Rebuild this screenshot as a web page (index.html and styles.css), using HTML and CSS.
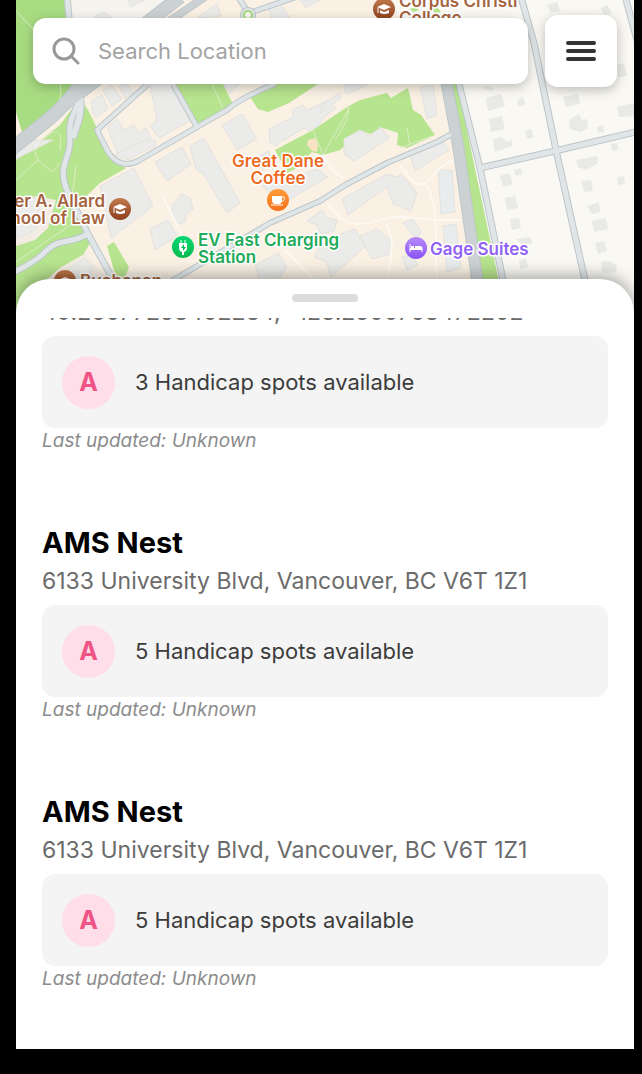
FILE: index.html
```html
<!DOCTYPE html>
<html lang="en">
<head>
    <meta charset="UTF-8">
    <meta name="viewport" content="width=device-width, initial-scale=1.0">
    <title>Parking</title>
    <link rel="stylesheet" href="styles.css">
</head>
<body>
    <div class="screen">
        <div class="map-area">
            <svg class="map" viewBox="16 0 618 320" preserveAspectRatio="xMidYMin slice" role="img" aria-label="Map">
                <defs>
                    <linearGradient id="brown" x1="0" y1="0" x2="0" y2="1"><stop offset="0" stop-color="#c17a4c"/><stop offset="1" stop-color="#8e3f1e"/></linearGradient>
                    <linearGradient id="orange" x1="0" y1="0" x2="0" y2="1"><stop offset="0" stop-color="#ff9d3b"/><stop offset="1" stop-color="#f7701d"/></linearGradient>
                    <linearGradient id="green" x1="0" y1="0" x2="0" y2="1"><stop offset="0" stop-color="#05d873"/><stop offset="1" stop-color="#08ba50"/></linearGradient>
                    <linearGradient id="purple" x1="0" y1="0" x2="0" y2="1"><stop offset="0" stop-color="#b78bfb"/><stop offset="1" stop-color="#8a52f3"/></linearGradient>
                    <g id="cap">
                        <path d="M-7-2L0-5 7-2 0 1z" fill="#fff"/>
                        <path d="M-4 1v3Q0 6 5 4V1L0 3z" fill="#fff"/>
                        <path d="M-6-1v5" stroke="#fff" fill="none"/>
                    </g>
                </defs>

                <!-- land -->
                <rect x="16" width="618" height="320" fill="#faf1e4"/>
                <path d="M385 0H634V320H505L478 200 440 60z" fill="#f9f8f3"/>
                <path d="M70 0H180L90 84H74z" fill="#f6f4ef"/>

                <!-- parks -->
                <g fill="#b7e48e">
                    <path d="M16 0H64L78 90 58 112 22 132 16 112z" fill="#a8dc82"/>
                    <path d="M16 160L60 125 80 98 88 110 97 128 112 160 126 168 100 183 80 202 76 212 92 240 83 255 60 268 40 285 16 310z"/>
                    <path d="M174 84H223L233 104 198 124z"/>
                    <path d="M249 96L258 109 268 112 289 103 318 84H277z"/>
                    <path d="M275 150L313 130 347 107 360 100 387 93 391 98 408 88 413 110 421 115 435 135 407 148 397 145 398 133 383 128 370 134 360 130 352 140 340 150 323 155 312 152 297 168 287 173z"/>
                    <path d="M107 246L114 242 129 267 125 277H116z"/>
                    <path d="M448 80H457L469 140 499 282H481L463 145z"/>
                    <path d="M410 9l6-2 3 3-6 2zM432 9l6-1 3 4-6 1z"/>
                </g>
                <path d="M16 210L34 196 56 200 48 228 35 240 16 246zM60 268L86 253 108 282H50z" fill="#f3ece2"/>
                <path d="M308 140l7-2 3 6-1 8-5-1-5-6z" fill="#f8e3c2"/>

                <!-- buildings -->
                <g fill="#ebebea" stroke="#e3e2df">
                    <path d="M92 100l10-5 6 14-12 8-4-6zM103 90l8-5 11 14-10 7zM119 86l8-3 6 10-8 6z"/>
                    <path d="M107 127l10-8 7 11 10-5 4 8 8-5 5 10-32 18z"/>
                    <path d="M150 84H170L190 121 159 138 150 126 157 120z"/>
                    <path d="M222 125l20-11 15 25-20 11z"/>
                    <path d="M269 129l24-12 0-7 10-5 5 5 20-10 8 8-12 9-5 9-12 5-3-3-20 12-5 2-3 4-6-4z"/>
                    <path d="M228 78h18l-16 15-6-7z"/>
                    <path d="M114 155l22-11 12-4h7l1 5-28 15z"/>
                    <path d="M155 162l27-15 9 17-24 17z"/>
                    <path d="M190 146l14-8 36 65-13 10-23-38-8-6z"/>
                    <path d="M100 186l34-18 19 38-42 32z"/>
                    <path d="M173 204l9-10 9 5 2 10-7 6-1 7-8 2-5-8z"/>
                    <path d="M150 229l18-9 9 16-22 14z"/>
                    <path d="M256 158l12-7 6 12-11 7z"/>
                    <path d="M262 186l56-17 10 8-45 26z"/>
                    <path d="M255 265l23-12 9 14-10 15h-17z"/>
                    <path d="M307 221l15-11 4 8 11 2-3 11-13 3-4-9z"/>
                    <path d="M342 199l45-25 10 3 4-3 8 8 8 12-6 17-18-7-6-17-39 28z"/>
                    <path d="M410 154l33-12 6 8-34 21z"/>
                    <path d="M438 170h14l3 42-14 2zM443 226l13-2 5 44-14 4z" fill="#e9ecec"/>
                    <path d="M360 236l17-7 13 10 1 15-11 3-8 2z"/>
                    <path d="M345 232l-25 13-6 12 13 5 4 15 34-30-10-18z"/>
                    <path d="M403 223l10-4 8 12-4 8zM402 257l10-2 6 10-11 5z"/>
                    <path d="M344 139l16-9 9 6 12-9 8 11-35 23-10-7z"/>
                    <path d="M420 87l13-2 4 30-10 4zM322 105l17-12 2 5-20 15zM344 85h24l-22 9z"/>
                    <path d="M16 208l17-11 7 5-5 28-19 9zM64 272l20-14 9 10-10 14H68z"/>
                    <path d="M16 143l20-3H53L16 159z"/>
                    <path d="M94 17l10-5 8 6zM128 0h16l-13 7z"/>
                    <path d="M197 18l20-14 4 12zM268 8l12-6 10 16h-18zM300 0h20l-14 8z"/>
                </g>
                <g fill="#e9e9e6">
                    <path d="M483 86l12 2-3 3-8-2zM486 98l15-4 4 12-17 5zM517 102l5-6 4 8-7 3zM489 119l13-3 3 13-14 3zM525 131l6-2 3 8-7 2zM493 139l9-2 4 5 6-2v6l-17 6z"/>
                    <path d="M563 97l15-3 2 10-14 3zM617 107l17-4v13l-15 1zM569 120l10-6 3 6 5-1 1 9-8 4-10-3zM597 127l6-2 1 7-6 1zM617 65l7-2 3 13-9 1zM547 5l10-3 3 9-9 2zM601 8l6-3 5 8-8 2z"/>
                    <path d="M500 176l9-3 4 11-10 3zM514 170l7-2 2 6-7 2zM505 198l10-2 3 12-11 2zM510 219l9-1 2 10-9 2zM516 239l14-2 3 6-10 3zM519 260l7-1 2 8-8 2z"/>
                    <path d="M576 160l21-4 1 7-12 7-8-3zM581 181l10-1 2 11-9 1zM587 206l12-4 1 10-8 2zM592 221l14-3 2 11-14 3zM595 243l9-2 3 10-9 3zM601 262l9-1 7 5-1 6-13 1zM617 177l7-1 1 8-7 1zM610 144l7-1 1 7-5 1z"/>
                </g>

                <!-- footpaths -->
                <g fill="none" stroke="#dcedc6" stroke-width="1">
                    <path d="M16 11L34 30M60 84C66 110 40 118 22 132M36 150C48 132 64 120 60 150M16 180L38 160 52 172 60 163M38 160L30 140M212 84L223 108M313 130L323 155 350 107M335 140C348 122 350 110 347 107M407 128L410 145M400 148L432 136M72 198L76 165M16 262L75 222"/>
                </g>
                <g fill="none" stroke="#fdf8f0" stroke-width="2">
                    <path d="M162 194L186 244M327 202C350 240 375 218 395 217S425 222 462 220M400 165C410 180 418 190 427 182S440 165 454 160M427 186C440 210 434 240 437 280M386 224C396 240 390 260 388 280M324 155Q332 175 345 178M285 250L316 282"/>
                </g>

                <!-- roads, edge first and surface on top -->
                <g fill="none" stroke-linejoin="round">
                    <g stroke="#bdc6c9">
                        <path stroke-width="7" d="M67 -4L72 50 79 90C81 112 67 112 70 140 70 160 58 165 66 188L88 234 116 285M88 234C66 246 60 236 43 254Q32 264 10 274"/>
                        <path stroke-width="6" d="M148 84L97 130 108 152Q120 170 138 161L197 127 227 110Q240 98 275 84M173 84L197 127"/>
                        <path stroke-width="6" d="M170 282L226 249 270 223 320 201 347 184 387 163 437 142 452 134M238 -3L246 9M252 12L296 -3"/>
                        <path stroke-width="7" d="M458 80L480 168 504 285M521 -3L534 43 556 150 586 285M480 168L555 151 640 131M625 -4L637 40"/>
                        <path stroke-width="14" d="M8 152L50 118Q66 104 76 90L140 28 180 -3"/>
                        <path stroke-width="8" d="M64 108L98 82 168 22 205 -3M79 90C84 115 76 125 73 138"/>
                        <path stroke-width="12" d="M436 40L446 80 458 145 478 285"/>
                    </g>
                    <g stroke="#e0e6e8">
                        <path stroke-width="5" d="M67 -4L72 50 79 90C81 112 67 112 70 140 70 160 58 165 66 188L88 234 116 285M88 234C66 246 60 236 43 254Q32 264 10 274"/>
                        <path stroke-width="4" d="M148 84L97 130 108 152Q120 170 138 161L197 127 227 110Q240 98 275 84M173 84L197 127"/>
                        <path stroke-width="4" d="M170 282L226 249 270 223 320 201 347 184 387 163 437 142 452 134M238 -3L246 9M252 12L296 -3"/>
                        <path stroke-width="5" d="M458 80L480 168 504 285M521 -3L534 43 556 150 586 285M480 168L555 151 640 131M625 -4L637 40"/>
                        <path stroke-width="6" d="M79 90C84 115 76 125 73 138"/>
                    </g>
                    <g stroke="#ccd2d3">
                        <path stroke-width="12" d="M8 152L50 118Q66 104 76 90L140 28 180 -3"/>
                        <path stroke-width="6" d="M64 108L98 82 168 22 205 -3"/>
                        <path stroke-width="10" d="M436 40L446 80 458 145 478 285"/>
                    </g>
                </g>
                <circle cx="248" cy="15" r="8" fill="#bdc6c9"/>
                <circle cx="248" cy="15" r="7" fill="#e0e6e8"/>
                <circle cx="248" cy="15" r="4" fill="#f9f8f3" stroke="#a5d97b" stroke-width="2"/>

                <!-- places -->
                <g class="place brown">
                    <circle cx="384" cy="9" r="11" fill="url(#brown)"/>
                    <use href="#cap" x="384" y="9"/>
                    <text x="399" y="7">Corpus Christi</text>
                    <text x="399" y="24">College</text>
                </g>
                <g class="place brown">
                    <circle cx="120" cy="209" r="11" fill="url(#brown)"/>
                    <use href="#cap" x="120" y="209"/>
                    <text x="105" y="207" text-anchor="end">Peter A. Allard</text>
                    <text x="105" y="224" text-anchor="end">School of Law</text>
                </g>
                <g class="place brown">
                    <circle cx="65" cy="281" r="11" fill="url(#brown)"/>
                    <use href="#cap" x="65" y="282"/>
                    <text x="80" y="287">Buchanan</text>
                </g>
                <g class="place orange">
                    <circle cx="278" cy="200" r="11" fill="url(#orange)"/>
                    <path d="M272 196h10v4q0 4-3 4h-4q-3 0-3-4z" fill="#fff"/>
                    <path d="M282 197h2q2 3-3 5M271 205h12" fill="none" stroke="#fff"/>
                    <text x="278" y="167" text-anchor="middle">Great Dane</text>
                    <text x="278" y="184" text-anchor="middle">Coffee</text>
                </g>
                <g class="place green">
                    <circle cx="183" cy="247" r="11" fill="url(#green)"/>
                    <path d="M179 243h8v5q0 3-3 4v3h-2v-3q-3-1-3-4z" fill="#fff"/>
                    <path d="M181 240v3M185 240v3" stroke="#fff" stroke-width="1"/>
                    <path d="M184 244l-3 4h2v3l3-4h-2z" fill="#09c45b"/>
                    <text x="198" y="246">EV Fast Charging</text>
                    <text x="198" y="263">Station</text>
                </g>
                <g class="place purple">
                    <circle cx="416" cy="248" r="11" fill="url(#purple)"/>
                    <path d="M410 244v8M422 247v5" stroke="#fff" stroke-width="1"/>
                    <path d="M410 248h12v2h-12z" fill="#fff"/>
                    <path d="M411 246h3v2h-3zM415 246h6l1 2h-7z" fill="#fff"/>
                    <text x="430" y="255">Gage Suites</text>
                </g>
            </svg>

            <header class="top-bar">
                <label class="search">
                    <svg class="search-icon" viewBox="0 0 28 28" fill="none" stroke="#999" stroke-width="3" stroke-linecap="round" aria-hidden="true">
                        <circle cx="12" cy="12" r="10"/>
                        <path d="M19 19l7 7"/>
                    </svg>
                    <input type="text" placeholder="Search Location" aria-label="Search Location">
                </label>
                <button class="menu-btn" type="button" aria-label="Menu">
                    <svg class="menu-icon" viewBox="0 0 30 20" stroke="#333" stroke-width="4" stroke-linecap="round" aria-hidden="true">
                        <path d="M2 2h26M2 10h26M2 18h26"/>
                    </svg>
                </button>
            </header>
        </div>

        <main class="sheet">
            <div class="handle"></div>
            <div class="list">
                <section class="spot">
                    <p class="address">49.26077253402234, -123.2500763472202</p>
                    <div class="card">
                        <span class="badge">A</span>
                        <span class="count">3 Handicap spots available</span>
                    </div>
                    <p class="updated">Last updated: Unknown</p>
                </section>
                <section class="spot">
                    <h2>AMS Nest</h2>
                    <p class="address">6133 University Blvd, Vancouver, BC V6T 1Z1</p>
                    <div class="card">
                        <span class="badge">A</span>
                        <span class="count">5 Handicap spots available</span>
                    </div>
                    <p class="updated">Last updated: Unknown</p>
                </section>
                <section class="spot">
                    <h2>AMS Nest</h2>
                    <p class="address">6133 University Blvd, Vancouver, BC V6T 1Z1</p>
                    <div class="card">
                        <span class="badge">A</span>
                        <span class="count">5 Handicap spots available</span>
                    </div>
                    <p class="updated">Last updated: Unknown</p>
                </section>
            </div>
        </main>
    </div>
</body>
</html>
```
FILE: styles.css
```css
* {
    margin: 0;
    padding: 0;
    box-sizing: border-box;
}

body {
    height: 100vh;
    padding: 0 8px 25px 16px;
    background-color: #000;
    font-family: Inter, "Liberation Sans", sans-serif;
}

.screen {
    display: flex;
    flex-direction: column;
    height: 100%;
    overflow: hidden;
    background-color: #f9f8f3;
}

/* map */
.map-area {
    position: relative;
    flex: none;
    height: 279px;
}

.map {
    position: absolute;
    top: 0;
    left: 0;
    width: 100%;
    height: 320px;
}

.place text {
    font-size: 17px;
    font-weight: 600;
    stroke: #fff;
    stroke-width: 3px;
    stroke-linejoin: round;
    paint-order: stroke;
}
.brown text { fill: #a5643f; }
.orange text { fill: #ee6a1f; }
.green text { fill: #1fab59; }
.purple text { fill: #9160f5; }

.top-bar {
    position: relative;
    display: flex;
    align-items: center;
    gap: 17px;
    padding: 15px 17px 0;
}

.search {
    display: flex;
    flex: 1;
    align-items: center;
    gap: 18px;
    height: 66px;
    padding: 0 19px;
    border-radius: 13px;
    background-color: #fff;
    box-shadow: 0 3px 12px rgba(0, 0, 0, .25);
}
.search-icon {
    width: 28px;
    height: 28px;
}
.search input {
    flex: 1;
    min-width: 0;
    border: 0;
    outline: 0;
    background: none;
    font: inherit;
    font-size: 22px;
    color: #333;
}
.search input::placeholder { color: #a3a3a3; }

.menu-btn {
    display: flex;
    align-items: center;
    justify-content: center;
    width: 72px;
    height: 72px;
    border: 0;
    border-radius: 13px;
    background-color: #fff;
    box-shadow: 0 3px 12px rgba(0, 0, 0, .25);
}
.menu-icon {
    width: 30px;
    height: 20px;
}

/* bottom sheet */
.sheet {
    position: relative;
    display: flex;
    flex: 1;
    flex-direction: column;
    min-height: 0;
    padding-top: 15px;
    border-radius: 34px 34px 0 0;
    background-color: #fff;
    box-shadow: 0 -3px 16px rgba(0, 0, 0, .35);
}

.handle {
    flex: none;
    align-self: center;
    width: 66px;
    height: 8px;
    margin-bottom: 16px;
    border-radius: 4px;
    background-color: #dcdcdc;
}

/* list rests at its last item */
.list {
    display: flex;
    flex: 1;
    flex-direction: column;
    justify-content: flex-end;
    gap: 71px;
    min-height: 0;
    overflow: hidden;
    padding: 0 26px 57px;
}

.spot h2 {
    margin-bottom: 5px;
    font-size: 29px;
    font-weight: 700;
    line-height: 36px;
    color: #000;
}
.address {
    margin-bottom: 9px;
    font-size: 23px;
    line-height: 30px;
    color: #6b6b6b;
}
.card {
    display: flex;
    align-items: center;
    gap: 20px;
    height: 92px;
    padding: 0 20px;
    border-radius: 13px;
    background-color: #f4f4f4;
}
.badge {
    display: flex;
    align-items: center;
    justify-content: center;
    width: 53px;
    height: 53px;
    border-radius: 50%;
    background-color: #ffdde9;
    font-size: 25px;
    font-weight: 700;
    color: #ee5586;
}
.count {
    font-size: 22px;
    color: #3c3c3c;
}
.updated {
    font-size: 19px;
    font-style: italic;
    line-height: 26px;
    color: #8c8c8c;
}
```
